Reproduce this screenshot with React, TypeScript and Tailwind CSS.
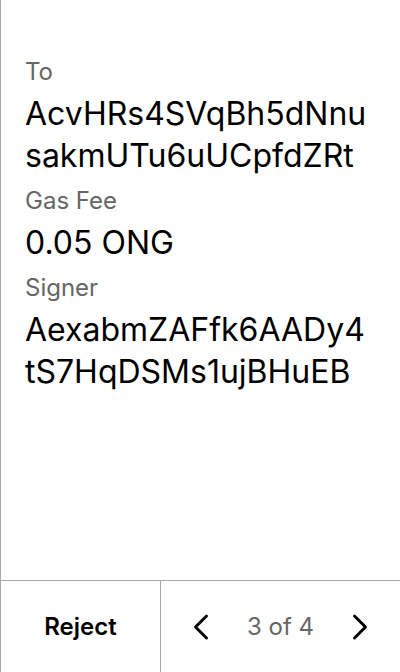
import React from "react";
import { ChevronLeft, ChevronRight } from "lucide-react";

const fields = [
  { label: "To", value: "AcvHRs4SVqBh5dNnusakmUTu6uUCpfdZRt" },
  { label: "Gas Fee", value: "0.05 ONG" },
  { label: "Signer", value: "AexabmZAFfk6AADy4tS7HqDSMs1ujBHuEB" },
];

export default function App() {
  return (
    <div
      className="flex h-[672px] w-[400px] flex-col border-l border-[#a8a8a8] bg-white text-black"
      style={{ fontFamily: "Inter, 'Noto Sans', sans-serif" }}
    >
      {/* Details */}
      <div className="flex flex-1 flex-col pl-6 pr-7 pt-[57px]">
        {fields.map((f) => (
          <div key={f.label} className="mb-[9px] flex flex-col">
            <div className="text-[24px] leading-[30px] text-[#666666]">{f.label}</div>
            <div className="mt-1.5 break-all text-[32px] leading-[42px]">{f.value}</div>
          </div>
        ))}
      </div>

      {/* Footer */}
      <div className="flex h-[92px] border-t border-[#a8a8a8]">
        <button className="flex w-[160px] items-center justify-center border-r border-[#a8a8a8] text-[24px] font-semibold">
          Reject
        </button>
        <div className="flex flex-1 items-center justify-between px-[18px]">
          <ChevronLeft className="h-11 w-11" strokeWidth={1.6} />
          <span className="text-[24px] text-[#666666]">3 of 4</span>
          <ChevronRight className="h-11 w-11" strokeWidth={1.6} />
        </div>
      </div>
    </div>
  );
}
